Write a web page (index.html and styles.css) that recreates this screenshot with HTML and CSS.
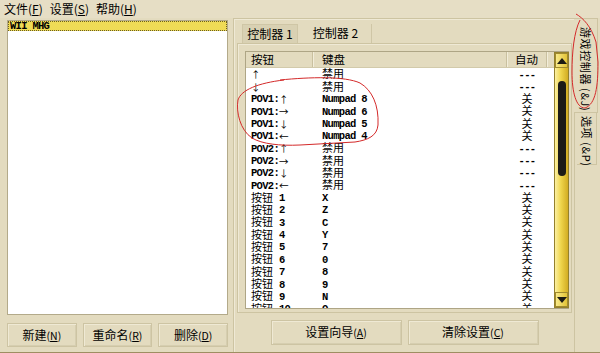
FILE: index.html
```html
<!DOCTYPE html>
<html lang="zh">
<head>
<meta charset="utf-8">
<title>控制器设置</title>
<link rel="stylesheet" href="styles.css">
</head>
<body>
<div class="window">
  <div class="menubar">
    <span class="menu">文件(<u>F</u>)</span>
    <span class="menu">设置(<u>S</u>)</span>
    <span class="menu">帮助(<u>H</u>)</span>
  </div>
  <div class="main">
    <div class="left">
      <div class="listbox">
        <div class="item sel">WII MHG</div>
      </div>
      <div class="btnrow">
        <button class="btn">新建<span class="acc">(<u>N</u>)</span></button>
        <button class="btn">重命名<span class="acc">(<u>R</u>)</span></button>
        <button class="btn">删除<span class="acc">(<u>D</u>)</span></button>
      </div>
    </div>
    <div class="right">
      <div class="tabs">
        <div class="tab active">控制器 1</div>
        <div class="tab">控制器 2</div>
      </div>
      <div class="panel">
        <div class="lv">
          <div class="lv-main">
            <div class="lv-head">
              <div class="hc c1">按钮</div>
              <div class="hc c2">键盘</div>
              <div class="hc c3">自动</div>
              <div class="hc c4"></div>
            </div>
            <div class="lv-body">
              <div class="row"><div class="c1"><span class="ar">↑</span></div><div class="c2"><span class="cj">禁用</span></div><div class="c3"><span class="m">---</span></div></div>
              <div class="row"><div class="c1"><span class="ar">↓</span></div><div class="c2"><span class="cj">禁用</span></div><div class="c3"><span class="m">---</span></div></div>
              <div class="row"><div class="c1"><span class="m">POV1:</span><span class="ar">↑</span></div><div class="c2"><span class="m">Numpad 8</span></div><div class="c3"><span class="cj">关</span></div></div>
              <div class="row"><div class="c1"><span class="m">POV1:</span><span class="ar">→</span></div><div class="c2"><span class="m">Numpad 6</span></div><div class="c3"><span class="cj">关</span></div></div>
              <div class="row"><div class="c1"><span class="m">POV1:</span><span class="ar">↓</span></div><div class="c2"><span class="m">Numpad 5</span></div><div class="c3"><span class="cj">关</span></div></div>
              <div class="row"><div class="c1"><span class="m">POV1:</span><span class="ar">←</span></div><div class="c2"><span class="m">Numpad 4</span></div><div class="c3"><span class="cj">关</span></div></div>
              <div class="row"><div class="c1"><span class="m">POV2:</span><span class="ar">↑</span></div><div class="c2"><span class="cj">禁用</span></div><div class="c3"><span class="m">---</span></div></div>
              <div class="row"><div class="c1"><span class="m">POV2:</span><span class="ar">→</span></div><div class="c2"><span class="cj">禁用</span></div><div class="c3"><span class="m">---</span></div></div>
              <div class="row"><div class="c1"><span class="m">POV2:</span><span class="ar">↓</span></div><div class="c2"><span class="cj">禁用</span></div><div class="c3"><span class="m">---</span></div></div>
              <div class="row"><div class="c1"><span class="m">POV2:</span><span class="ar">←</span></div><div class="c2"><span class="cj">禁用</span></div><div class="c3"><span class="m">---</span></div></div>
              <div class="row"><div class="c1"><span class="cj">按钮</span><span class="m n">1</span></div><div class="c2"><span class="m">X</span></div><div class="c3"><span class="cj">关</span></div></div>
              <div class="row"><div class="c1"><span class="cj">按钮</span><span class="m n">2</span></div><div class="c2"><span class="m">Z</span></div><div class="c3"><span class="cj">关</span></div></div>
              <div class="row"><div class="c1"><span class="cj">按钮</span><span class="m n">3</span></div><div class="c2"><span class="m">C</span></div><div class="c3"><span class="cj">关</span></div></div>
              <div class="row"><div class="c1"><span class="cj">按钮</span><span class="m n">4</span></div><div class="c2"><span class="m">Y</span></div><div class="c3"><span class="cj">关</span></div></div>
              <div class="row"><div class="c1"><span class="cj">按钮</span><span class="m n">5</span></div><div class="c2"><span class="m">7</span></div><div class="c3"><span class="cj">关</span></div></div>
              <div class="row"><div class="c1"><span class="cj">按钮</span><span class="m n">6</span></div><div class="c2"><span class="m">0</span></div><div class="c3"><span class="cj">关</span></div></div>
              <div class="row"><div class="c1"><span class="cj">按钮</span><span class="m n">7</span></div><div class="c2"><span class="m">8</span></div><div class="c3"><span class="cj">关</span></div></div>
              <div class="row"><div class="c1"><span class="cj">按钮</span><span class="m n">8</span></div><div class="c2"><span class="m">9</span></div><div class="c3"><span class="cj">关</span></div></div>
              <div class="row"><div class="c1"><span class="cj">按钮</span><span class="m n">9</span></div><div class="c2"><span class="m">N</span></div><div class="c3"><span class="cj">关</span></div></div>
              <div class="row"><div class="c1"><span class="cj">按钮</span><span class="m n">10</span></div><div class="c2"><span class="m">O</span></div><div class="c3"><span class="cj">关</span></div></div>
            </div>
          </div>
          <div class="sb">
            <div class="sb-btn"><span class="tri up"></span></div>
            <div class="sb-track"><div class="sb-thumb"></div></div>
            <div class="sb-btn"><span class="tri down"></span></div>
          </div>
        </div>
      </div>
      <div class="actions">
        <button class="btn wide">设置向导<span class="acc">(<u>A</u>)</span></button>
        <button class="btn wide">清除设置<span class="acc">(<u>C</u>)</span></button>
      </div>
    </div>
    <div class="vtabs">
      <div class="vtab active">游戏控制器 (&amp;J)</div>
      <div class="vtab">选项 (&amp;P)</div>
    </div>
  </div>
  <svg class="annot" width="600" height="353" viewBox="0 0 600 353">
    <path d="M 280 80 C 310 77, 345 76, 360 83 C 372 90, 379 105, 378 125 C 377 136, 368 140, 355 142 L 300 145 C 280 146, 262 144, 252 138 C 240 130, 236 112, 238 100 C 241 90, 258 83, 284 80" />
    <path d="M 576 14 C 583 18, 591 26, 596 42 L 598 62 C 598 86, 596 104, 585 108 C 576 108, 572 92, 572 72 C 572 52, 574 32, 580 20" />
  </svg>
</div>
</body>
</html>
```

FILE: styles.css
```css
html, body {
  margin: 0;
  padding: 0;
}

body {
  width: 600px;
  height: 353px;
  overflow: hidden;
  background: #e3dbbf;
  font-family: "Noto Sans CJK SC", sans-serif;
  font-size: 12px;
  color: #000;
}

.window {
  position: relative;
  height: 352px;
  border-bottom: 1px solid #9e8e62;
  display: flex;
  flex-direction: column;
}

.menubar {
  height: 18px;
  display: flex;
  align-items: center;
  gap: 7px;
  padding-left: 4px;
  line-height: 16px;
  background: #e6dec5;
}

.main {
  display: flex;
  flex: 1;
  padding-left: 7px;
}

.left {
  width: 221px;
  display: flex;
  flex-direction: column;
  padding-top: 2px;
}

.listbox {
  height: 295px;
  box-sizing: border-box;
  background: #fff;
  border: 1px solid #b3aa8a;
}

.item {
  height: 10px;
  line-height: 10px;
  font-family: "Liberation Mono", monospace;
  font-size: 10.5px;
  letter-spacing: -0.7px;
  font-weight: bold;
  padding-left: 2px;
}

.item.sel {
  background: #efdb56;
  outline: 1px dotted #6b5e20;
  outline-offset: -1px;
}

.btnrow {
  display: flex;
  gap: 6px;
  margin-top: 8px;
}

.btn {
  flex: 1;
  height: 24px;
  padding: 0;
  background: #e3dbbf;
  border: 1px solid #cdc4a3;
  box-shadow: inset 1px 1px 0 #efe9d4, inset -1px -1px 0 #d6ceb0;
  font-family: "Noto Sans CJK SC", sans-serif;
  font-size: 12px;
  line-height: 20px;
  color: #000;
}

.acc {
  font-size: 10.5px;
}

.right {
  width: 342px;
  margin-left: 5px;
  box-sizing: border-box;
  border: 1px solid #cdc4a2;
  border-bottom: none;
  box-shadow: inset 1px 1px 0 #efe9d5;
  padding: 5px 2px 0 3px;
  display: flex;
  flex-direction: column;
}

.tabs {
  display: flex;
  height: 19px;
  margin-left: 5px;
}

.tab {
  height: 19px;
  line-height: 18px;
  text-align: center;
  box-sizing: border-box;
}

.tab:first-child {
  width: 56px;
  background: #d9d1b3;
  border: 1px solid #cfc6a6;
  border-bottom: none;
}

.tab:last-child {
  width: 72px;
  margin-left: 2px;
  border-right: 1px solid #cfc6a6;
}

.panel {
  border: 1px solid #cdc4a2;
  box-shadow: inset 1px 1px 0 #efe9d5;
  padding: 7px 2px 3px 7px;
}

.lv {
  display: flex;
  height: 258px;
  box-sizing: border-box;
  border: 1px solid #aea585;
  border-right: none;
}

.lv-main {
  flex: 1;
  display: flex;
  flex-direction: column;
  overflow: hidden;
  background: #fff;
}

.lv-head {
  display: flex;
  height: 15px;
  flex: none;
  background: #e3dbbf;
  border-bottom: 1px solid #d2caab;
}

.hc {
  line-height: 15px;
  font-size: 11.5px;
  box-sizing: border-box;
  border-right: 1px solid #c9c09f;
  box-shadow: 1px 0 0 #f2edda;
}

.c1 {
  width: 67px;
  padding-left: 5px;
  box-sizing: border-box;
  white-space: nowrap;
}

.c2 {
  width: 194px;
  padding-left: 9px;
  box-sizing: border-box;
  white-space: nowrap;
}

.c3 {
  width: 40px;
  text-align: center;
  box-sizing: border-box;
  white-space: nowrap;
}

.c4 {
  flex: 1;
  border-right: none;
  box-shadow: none;
}

.lv-body {
  flex: 1;
  overflow: hidden;
}

.row {
  display: flex;
  height: 12.35px;
}

.row > div {
  display: flex;
  align-items: center;
  height: 12.35px;
}

.row > .c3 {
  justify-content: center;
}

.m {
  font-family: "Liberation Mono", monospace;
  font-size: 10.5px;
  letter-spacing: -0.7px;
  font-weight: bold;
  line-height: 12px;
  margin-top: 1px;
  white-space: pre;
}

.m.n {
  margin-left: 6px;
}

.cj {
  font-family: "Noto Sans CJK SC", sans-serif;
  font-size: 11px;
  line-height: 12px;
  margin-bottom: 2px;
}

.ar {
  font-family: "Noto Sans CJK SC", sans-serif;
  font-size: 9.5px;
  line-height: 12px;
}

.sb {
  width: 15px;
  display: flex;
  flex-direction: column;
  background: linear-gradient(90deg, #fbf0a2 0%, #efd54c 45%, #d2ac22 100%);
  border: 1px solid #94802c;
  box-sizing: border-box;
}

.sb-btn {
  height: 13px;
  display: flex;
  align-items: center;
  justify-content: center;
  border: 1px solid #a08a2e;
  background: linear-gradient(90deg, #f9ea8a, #e2c336);
}

.tri {
  width: 0;
  height: 0;
  border-left: 5px solid transparent;
  border-right: 5px solid transparent;
}

.tri.up {
  border-bottom: 6px solid #1b1a14;
}

.tri.down {
  border-top: 6px solid #1b1a14;
}

.sb-track {
  flex: 1;
  display: flex;
  justify-content: center;
}

.sb-thumb {
  width: 8px;
  height: 95px;
  margin-top: 13px;
  background: #1c1b17;
  border-radius: 4px;
}

.actions {
  display: flex;
  justify-content: center;
  gap: 6px;
  margin-top: 7px;
}

.btn.wide {
  flex: none;
  width: 131px;
  height: 25px;
}

.vtabs {
  width: 25px;
  display: flex;
  flex-direction: column;
}

.vtab {
  writing-mode: vertical-rl;
  text-orientation: sideways;
  white-space: nowrap;
  font-size: 11px;
  line-height: 18px;
  letter-spacing: 0.6px;
  box-sizing: border-box;
}

.vtab.active {
  height: 95px;
  width: 24px;
  margin-left: -1px;
  padding-top: 8px;
  padding-right: 2px;
  background: #e3dbbf;
  border: 1px solid #cdc4a2;
  border-left: none;
}

.vtab:last-child {
  height: 52px;
  width: 20px;
  margin-left: 2px;
  padding-top: 3px;
  border-right: 1px solid #cdc4a2;
  border-bottom: 1px solid #cdc4a2;
}

.annot {
  position: absolute;
  left: 0;
  top: 0;
  pointer-events: none;
}

.annot path {
  fill: none;
  stroke: #d42a2a;
  stroke-width: 1;
}
```
